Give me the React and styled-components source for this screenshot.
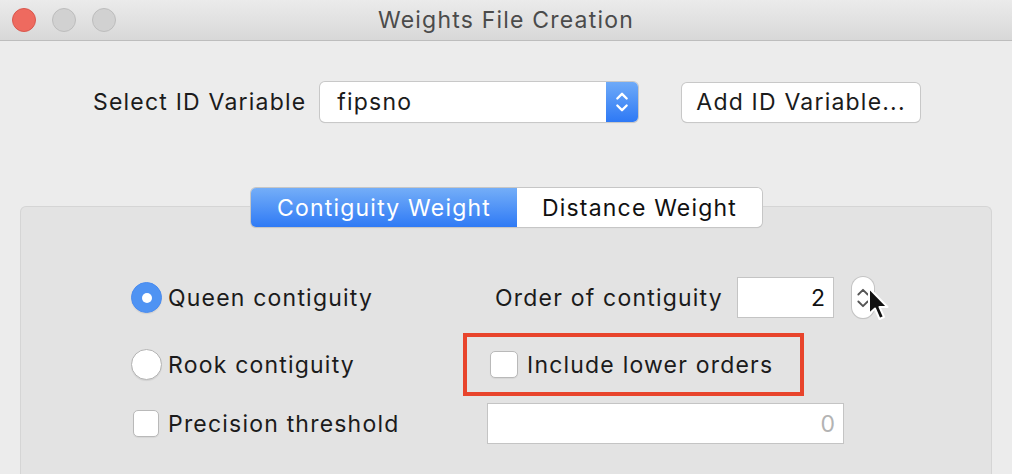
import React from "react";
import styled, { createGlobalStyle } from "styled-components";

const GlobalStyle = createGlobalStyle`
  html, body {
    margin: 0;
    padding: 0;
    background: #ececec;
    overflow: hidden;
  }
  body {
    font-family: Inter, "Noto Sans", "Liberation Sans", sans-serif;
    color: #1b1b1b;
    -webkit-font-smoothing: antialiased;
  }
`;

const Window = styled.div`
  width: 1012px;
  height: 474px;
  background: #ececec;
  display: flex;
  flex-direction: column;
  overflow: hidden;
`;

const TitleBar = styled.div`
  height: 40px;
  flex-shrink: 0;
  display: grid;
  grid-template-columns: 1fr auto 1fr;
  align-items: center;
  background: linear-gradient(#ebebeb, #d8d8d8);
  border-bottom: 1px solid #bdbdbd;
`;

const Lights = styled.div`
  display: flex;
  gap: 16px;
  padding-left: 12px;
`;

const Light = styled.span`
  width: 24px;
  height: 24px;
  box-sizing: border-box;
  border-radius: 50%;
  background: ${(p) => (p.red ? "#ee6a5f" : "#d1d1d1")};
  border: 1px solid ${(p) => (p.red ? "#d9574d" : "#bdbdbd")};
`;

const Title = styled.div`
  font-size: 23px;
  letter-spacing: 1.2px;
  color: #4b4b4b;
`;

const IdRow = styled.div`
  display: flex;
  align-items: center;
  margin-top: 41px;
  padding-left: 93px;
`;

const Label = styled.span`
  font-size: 23px;
  letter-spacing: 1.2px;
  white-space: nowrap;
  color: ${(p) => p.color || "#1b1b1b"};
  width: ${(p) => p.width || "auto"};
`;

const Select = styled.div`
  margin-left: 14px;
  width: 318px;
  height: 40px;
  box-sizing: border-box;
  display: flex;
  align-items: stretch;
  background: #fff;
  border-radius: 5px;
  box-shadow: 0 0 0 1px #c8c8c8, 0 1px 1px rgba(0, 0, 0, 0.15);
  overflow: hidden;
`;

const SelectValue = styled.div`
  flex: 1;
  display: flex;
  align-items: center;
  padding-left: 17px;
  font-size: 23px;
  letter-spacing: 1.2px;
`;

const SelectArrows = styled.div`
  width: 32px;
  display: flex;
  align-items: center;
  justify-content: center;
  background: linear-gradient(#6eaaf8, #2e79f5);
`;

const PushButton = styled.div`
  margin-left: 44px;
  width: 238px;
  height: 39px;
  box-sizing: border-box;
  display: flex;
  align-items: center;
  padding-left: 14px;
  background: #fff;
  border-radius: 5px;
  box-shadow: 0 0 0 1px #c8c8c8, 0 1px 1px rgba(0, 0, 0, 0.15);
  font-size: 23px;
  letter-spacing: 1.2px;
`;

const TabBar = styled.div`
  display: flex;
  justify-content: center;
  margin-top: 66px;
  margin-bottom: -21px;
  position: relative;
  z-index: 1;
  padding-left: 1px;
`;

const Tabs = styled.div`
  display: flex;
  height: 39px;
  border-radius: 5px;
  overflow: hidden;
  box-shadow: 0 0 0 1px #c6c6c6, 0 1px 1px rgba(0, 0, 0, 0.15);
`;

const Tab = styled.div`
  width: ${(p) => p.width}px;
  display: flex;
  align-items: center;
  justify-content: center;
  font-size: 23px;
  letter-spacing: 1.2px;
  color: ${(p) => (p.active ? "#fff" : "#111")};
  background: ${(p) =>
    p.active ? "linear-gradient(#74aef8, #2f7af5)" : "#fff"};
`;

const Panel = styled.div`
  margin: 0 20px;
  height: 280px;
  box-sizing: border-box;
  background: #e3e3e3;
  border: 1px solid #d5d5d5;
  border-bottom: none;
  border-radius: 6px 6px 0 0;
  padding: 70px 0 0 110px;
  display: flex;
  flex-direction: column;
`;

const Row = styled.div`
  display: grid;
  grid-template-columns: 332px auto;
  align-items: center;
  height: ${(p) => p.h}px;
  margin-top: ${(p) => p.mt || 0}px;
`;

const Option = styled.div`
  display: flex;
  align-items: center;
  gap: ${(p) => p.gap || 6}px;
  padding-left: ${(p) => p.indent || 0}px;
`;

const Radio = styled.span`
  width: 31px;
  height: 31px;
  box-sizing: border-box;
  border-radius: 50%;
  display: flex;
  align-items: center;
  justify-content: center;
  background: ${(p) => (p.checked ? "#4f93f3" : "#fff")};
  border: 1px solid ${(p) => (p.checked ? "#4a8cf0" : "#b4b4b4")};
  box-shadow: 0 1px 1px rgba(0, 0, 0, 0.08);

  &::after {
    content: "";
    display: ${(p) => (p.checked ? "block" : "none")};
    width: 10px;
    height: 10px;
    border-radius: 50%;
    background: #fff;
  }
`;

const Check = styled.span`
  width: ${(p) => p.size || 26}px;
  height: 27px;
  box-sizing: border-box;
  border-radius: 5px;
  background: #fff;
  border: 1px solid #b9b9b9;
  box-shadow: 0 1px 1px rgba(0, 0, 0, 0.06);
`;

const OrderCell = styled.div`
  display: flex;
  align-items: center;
  padding-left: 32px;
`;

const NumberField = styled.div`
  width: ${(p) => p.width}px;
  height: 41px;
  box-sizing: border-box;
  background: #fff;
  border: 1px solid #c4c4c4;
  display: flex;
  align-items: center;
  justify-content: flex-end;
  padding-right: ${(p) => p.pr || 8}px;
  margin-left: ${(p) => p.ml || 0}px;
  font-size: 23px;
  color: ${(p) => (p.muted ? "#b3b3b3" : "#111")};
`;

const Stepper = styled.div`
  position: relative;
  margin-left: 18px;
  width: 22px;
  height: 41px;
  box-sizing: border-box;
  background: #fff;
  border-radius: 11px;
  box-shadow: 0 0 0 1px #c4c4c4, 0 1px 1px rgba(0, 0, 0, 0.12);
  display: flex;
  align-items: center;
  justify-content: center;
`;

const Cursor = styled.svg`
  position: absolute;
  left: 15px;
  top: 9px;
`;

const Highlight = styled.div`
  width: 341px;
  height: 63px;
  box-sizing: border-box;
  border: 4px solid #e8442c;
  display: flex;
  align-items: center;
  padding-left: 23px;
  gap: 9px;
`;

const Chevrons = ({ color, w, h, sw = 2 }) => (
  <svg width={w} height={h} viewBox="0 0 12 24" fill="none">
    <path d="M2 9 L6 5 L10 9" stroke={color} strokeWidth={sw} strokeLinecap="round" strokeLinejoin="round" />
    <path d="M2 15 L6 19 L10 15" stroke={color} strokeWidth={sw} strokeLinecap="round" strokeLinejoin="round" />
  </svg>
);

export default function App() {
  return (
    <Window>
      <GlobalStyle />
      <TitleBar>
        <Lights>
          <Light red />
          <Light />
          <Light />
        </Lights>
        <Title>Weights File Creation</Title>
        <div />
      </TitleBar>

      <IdRow>
        <Label>Select ID Variable</Label>
        <Select>
          <SelectValue>fipsno</SelectValue>
          <SelectArrows>
            <Chevrons color="#fff" w={14} h={28} />
          </SelectArrows>
        </Select>
        <PushButton>Add ID Variable...</PushButton>
      </IdRow>

      <TabBar>
        <Tabs>
          <Tab active width={266}>Contiguity Weight</Tab>
          <Tab width={245}>Distance Weight</Tab>
        </Tabs>
      </TabBar>

      <Panel>
        <Row h={41}>
          <Option>
            <Radio checked />
            <Label>Queen contiguity</Label>
          </Option>
          <OrderCell>
            <Label width="242px">Order of contiguity</Label>
            <NumberField width={97}>2</NumberField>
            <Stepper>
              <Chevrons color="#555" w={14} h={36} sw={1.6} />
              <Cursor width="26" height="38" viewBox="0 0 26 38">
                <path
                  d="M2 2 L2 28 L8 22.5 L12.5 33 L17 31 L12.5 21 L20.5 21 Z"
                  fill="#111"
                  stroke="#fff"
                  strokeWidth="2"
                  strokeLinejoin="round"
                />
              </Cursor>
            </Stepper>
          </OrderCell>
        </Row>

        <Row h={63} mt={15}>
          <Option>
            <Radio />
            <Label>Rook contiguity</Label>
          </Option>
          <Highlight>
            <Check size={28} />
            <Label>Include lower orders</Label>
          </Highlight>
        </Row>

        <Row h={41} mt={7}>
          <Option indent={2} gap={9}>
            <Check />
            <Label>Precision threshold</Label>
          </Option>
          <NumberField width={357} ml={24} pr={8} muted>
            0
          </NumberField>
        </Row>
      </Panel>
    </Window>
  );
}
